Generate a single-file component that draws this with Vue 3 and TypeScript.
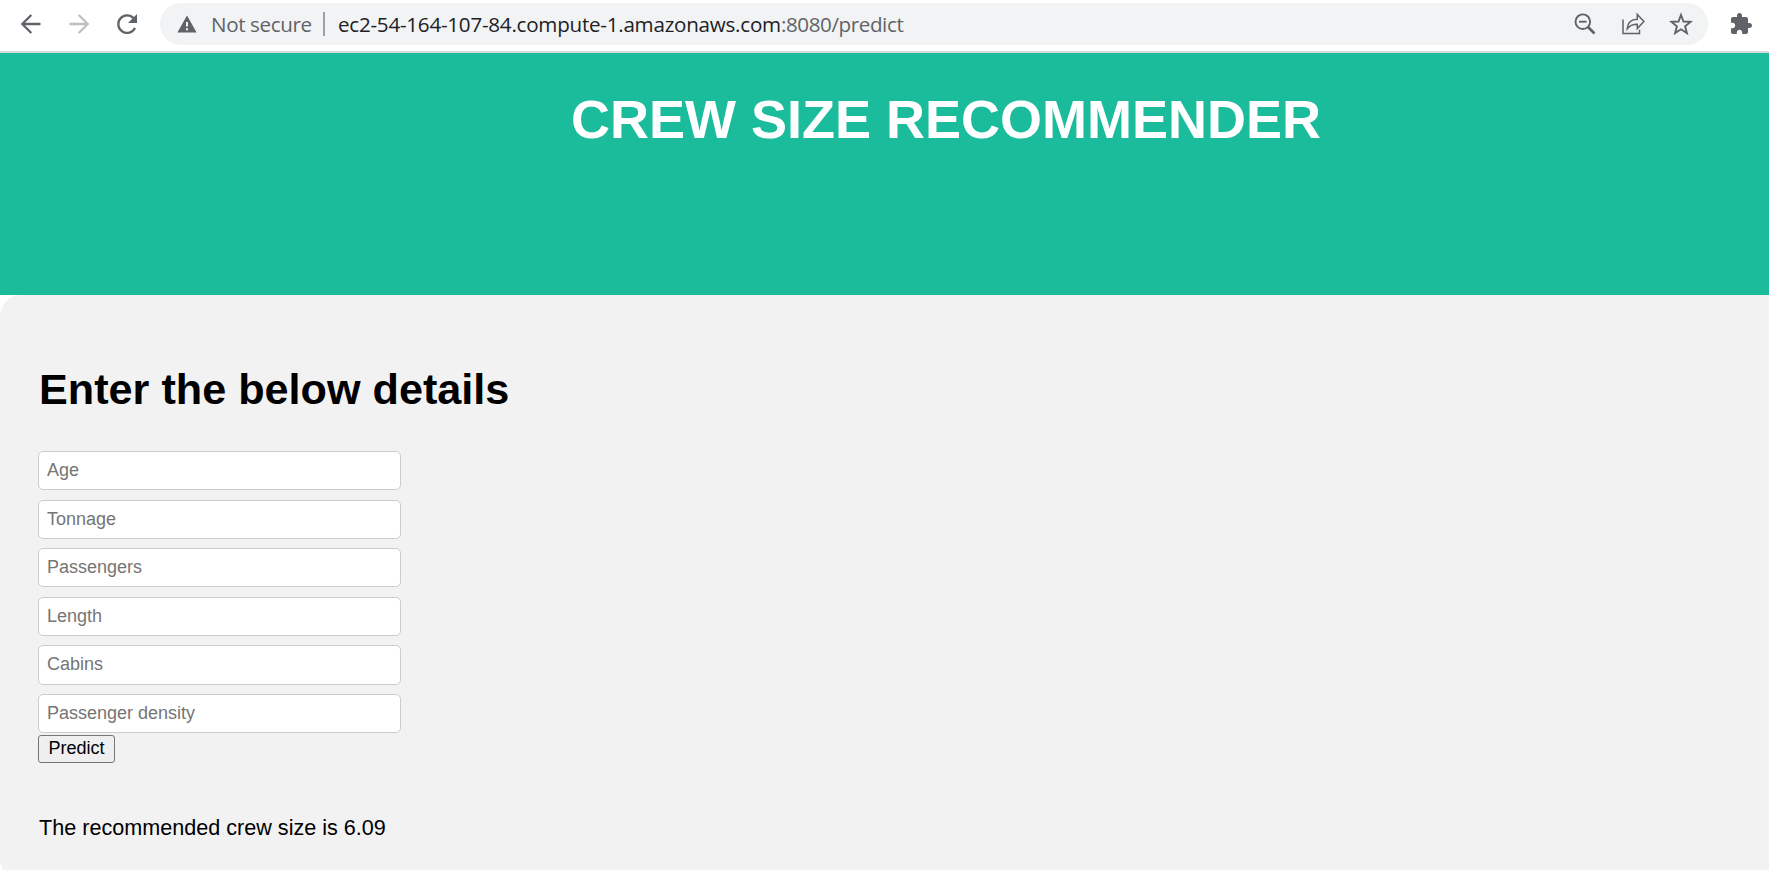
<script setup lang="ts">
import { ref } from 'vue'

interface Field {
  key: string
  label: string
}

const fields: Field[] = [
  { key: 'age', label: 'Age' },
  { key: 'tonnage', label: 'Tonnage' },
  { key: 'passengers', label: 'Passengers' },
  { key: 'length', label: 'Length' },
  { key: 'cabins', label: 'Cabins' },
  { key: 'density', label: 'Passenger density' },
]

const values = ref<Record<string, string>>({})
const crewSize = ref('6.09')
</script>

<template>
  <div class="window">
    <nav class="toolbar">
      <svg class="nav-icon" viewBox="0 0 24 24"><path d="M21.5 12H3.5M12.3 3L3.3 12l9 9" /></svg>
      <svg class="nav-icon disabled" viewBox="0 0 24 24"><path d="M2.500 12h18M11.700 3l9 9-9 9" /></svg>
      <svg class="nav-icon" viewBox="0 0 24 24">
        <path d="M20 16A8.800 8.800 0 1 1 18.500 6.100" />
        <path class="solid" d="M22 2v9h-9z" />
      </svg>
      <div class="omnibox">
        <svg class="warning" viewBox="0 0 20 18">
          <path d="M10 .5L19.600 17.500H.4z" fill="#5f6368" />
          <path d="M9 7h2v4.600H9zM9 13.200h2v2H9z" fill="#f1f3f4" />
        </svg>
        <span class="security">Not secure</span>
        <span class="separator"></span>
        <span class="host">ec2-54-164-107-84.compute-1.amazonaws.com</span><span class="path">:8080/predict</span>
        <div class="actions">
          <svg viewBox="0 0 24 24">
            <circle cx="9.800" cy="9.700" r="7.300" /><path d="M6 9.700h7.600" /><path class="thick" d="M15 15l6.500 6.500" />
          </svg>
          <svg class="share" viewBox="0 0 24 24">
            <path d="M2 7.500v14h16.500v-3.700M6.200 16.800c.4-5.900 4.100-9.400 10.100-9.500V2.500l6.600 7-6.600 7v-4.300c-4.500 0-7.600 1.100-10.100 4.600z" />
          </svg>
          <svg viewBox="0 0 24 24">
            <path d="M12 3l2.500 6.500 7 .4-5.400 4.400 1.800 6.800L12 17.300l-5.900 3.800 1.800-6.800-5.400-4.400 7-.4z" />
          </svg>
        </div>
      </div>
      <svg class="extension" viewBox="0 0 24 24">
        <path d="M20.500 11H19V7c0-1.100-.9-2-2-2h-4V3.500C13 2.120 11.880 1 10.500 1S8 2.120 8 3.500V5H4c-1.100 0-1.990.9-1.990 2v3.800H3.500c1.490 0 2.700 1.210 2.700 2.700s-1.210 2.700-2.700 2.700H2V20c0 1.100.9 2 2 2h3.800v-1.500c0-1.490 1.210-2.700 2.700-2.700s2.700 1.210 2.700 2.700V22H17c1.100 0 2-.9 2-2v-4h1.500c1.380 0 2.500-1.120 2.500-2.500S21.880 11 20.500 11z" />
      </svg>
    </nav>
    <header class="banner">
      <h1>CREW SIZE RECOMMENDER</h1>
    </header>
    <main class="panel">
      <h2>Enter the below details</h2>
      <form @submit.prevent>
        <input v-for="f in fields" :key="f.key" v-model="values[f.key]" type="text" :placeholder="f.label" />
        <button type="submit">Predict</button>
      </form>
      <p class="result">The recommended crew size is {{ crewSize }}</p>
    </main>
  </div>
</template>

<style>
body {
  margin: 0;
  background: #fff;
}
</style>

<style scoped>
.window {
  height: 870px;
  overflow: hidden;
  font-family: 'Liberation Sans', Arial, sans-serif;
  font-size: 21.6px;
  color: #000;
}
.toolbar {
  box-sizing: border-box;
  height: 53px;
  padding: 3px 0 0 19px;
  border-bottom: 2px solid #d8dadd;
  display: flex;
  align-items: flex-start;
}
.nav-icon {
  width: 24px;
  height: 24px;
  margin: 9px 24px 0 0;
  fill: none;
  stroke: #5f6368;
  stroke-width: 2.3;
}
.nav-icon.disabled {
  stroke: #bcbec0;
}
.nav-icon .solid {
  fill: #5f6368;
  stroke: none;
}
.omnibox {
  box-sizing: border-box;
  width: 1548px;
  height: 42px;
  margin-left: -3px;
  padding: 0 15px 0 17px;
  border-radius: 21px;
  background: #f1f3f4;
  display: flex;
  align-items: center;
  font-family: 'Open Sans', 'Noto Sans', sans-serif;
  font-size: 20.6px;
  line-height: 42px;
  white-space: nowrap;
}
.warning {
  width: 20px;
  height: 18px;
  margin-right: 14px;
}
.security {
  width: 112px;
  color: #5f6368;
  letter-spacing: -0.38px;
}
.separator {
  width: 2px;
  height: 24px;
  margin-right: 13px;
  background: #9aa0a6;
}
.host {
  color: #202124;
  letter-spacing: -0.24px;
}
.path {
  color: #5f6368;
  letter-spacing: -0.4px;
}
.actions {
  margin-left: auto;
  display: flex;
  gap: 24px;
}
.actions svg {
  width: 24px;
  height: 24px;
  fill: none;
  stroke: #5f6368;
  stroke-width: 1.9;
}
.actions .share {
  stroke-width: 1.5;
}
.actions .thick {
  stroke-width: 2.7;
}
.extension {
  width: 24px;
  height: 24px;
  margin: 9px 0 0 21px;
  fill: #5f6368;
}
.banner {
  box-sizing: border-box;
  height: 242px;
  padding: 35px 0 0 123px;
  background: #1abc9c;
  color: #fff;
  text-align: center;
}
h1 {
  margin: 0;
  font-size: 54px;
  line-height: 62px;
}
.panel {
  box-sizing: border-box;
  height: 585px;
  padding: 69px 38px 0;
  border-radius: 21px 0 0 21px;
  background: #f2f2f2;
}
h2 {
  margin: 0 0 0 1px;
  font-size: 43.2px;
  line-height: 50px;
}
form {
  margin-top: 37px;
  display: flex;
  flex-direction: column;
  align-items: flex-start;
}
input {
  box-sizing: border-box;
  width: 363px;
  height: 39.2px;
  margin: 0 0 9.4px;
  padding: 0 8px;
  border: 1px solid #ccc;
  border-radius: 5px;
  background: #fff;
  font: 18px 'Liberation Sans', Arial, sans-serif;
}
input::placeholder {
  color: #757575;
}
button {
  box-sizing: border-box;
  width: 77px;
  height: 28px;
  margin-top: -7.6px;
  padding: 0;
  border: 1px solid #767676;
  border-radius: 3px;
  background: #efefef;
  color: #000;
  font: 18px 'Liberation Sans', Arial, sans-serif;
}
.result {
  margin: 52px 0 0 1px;
  line-height: 25px;
}
</style>
